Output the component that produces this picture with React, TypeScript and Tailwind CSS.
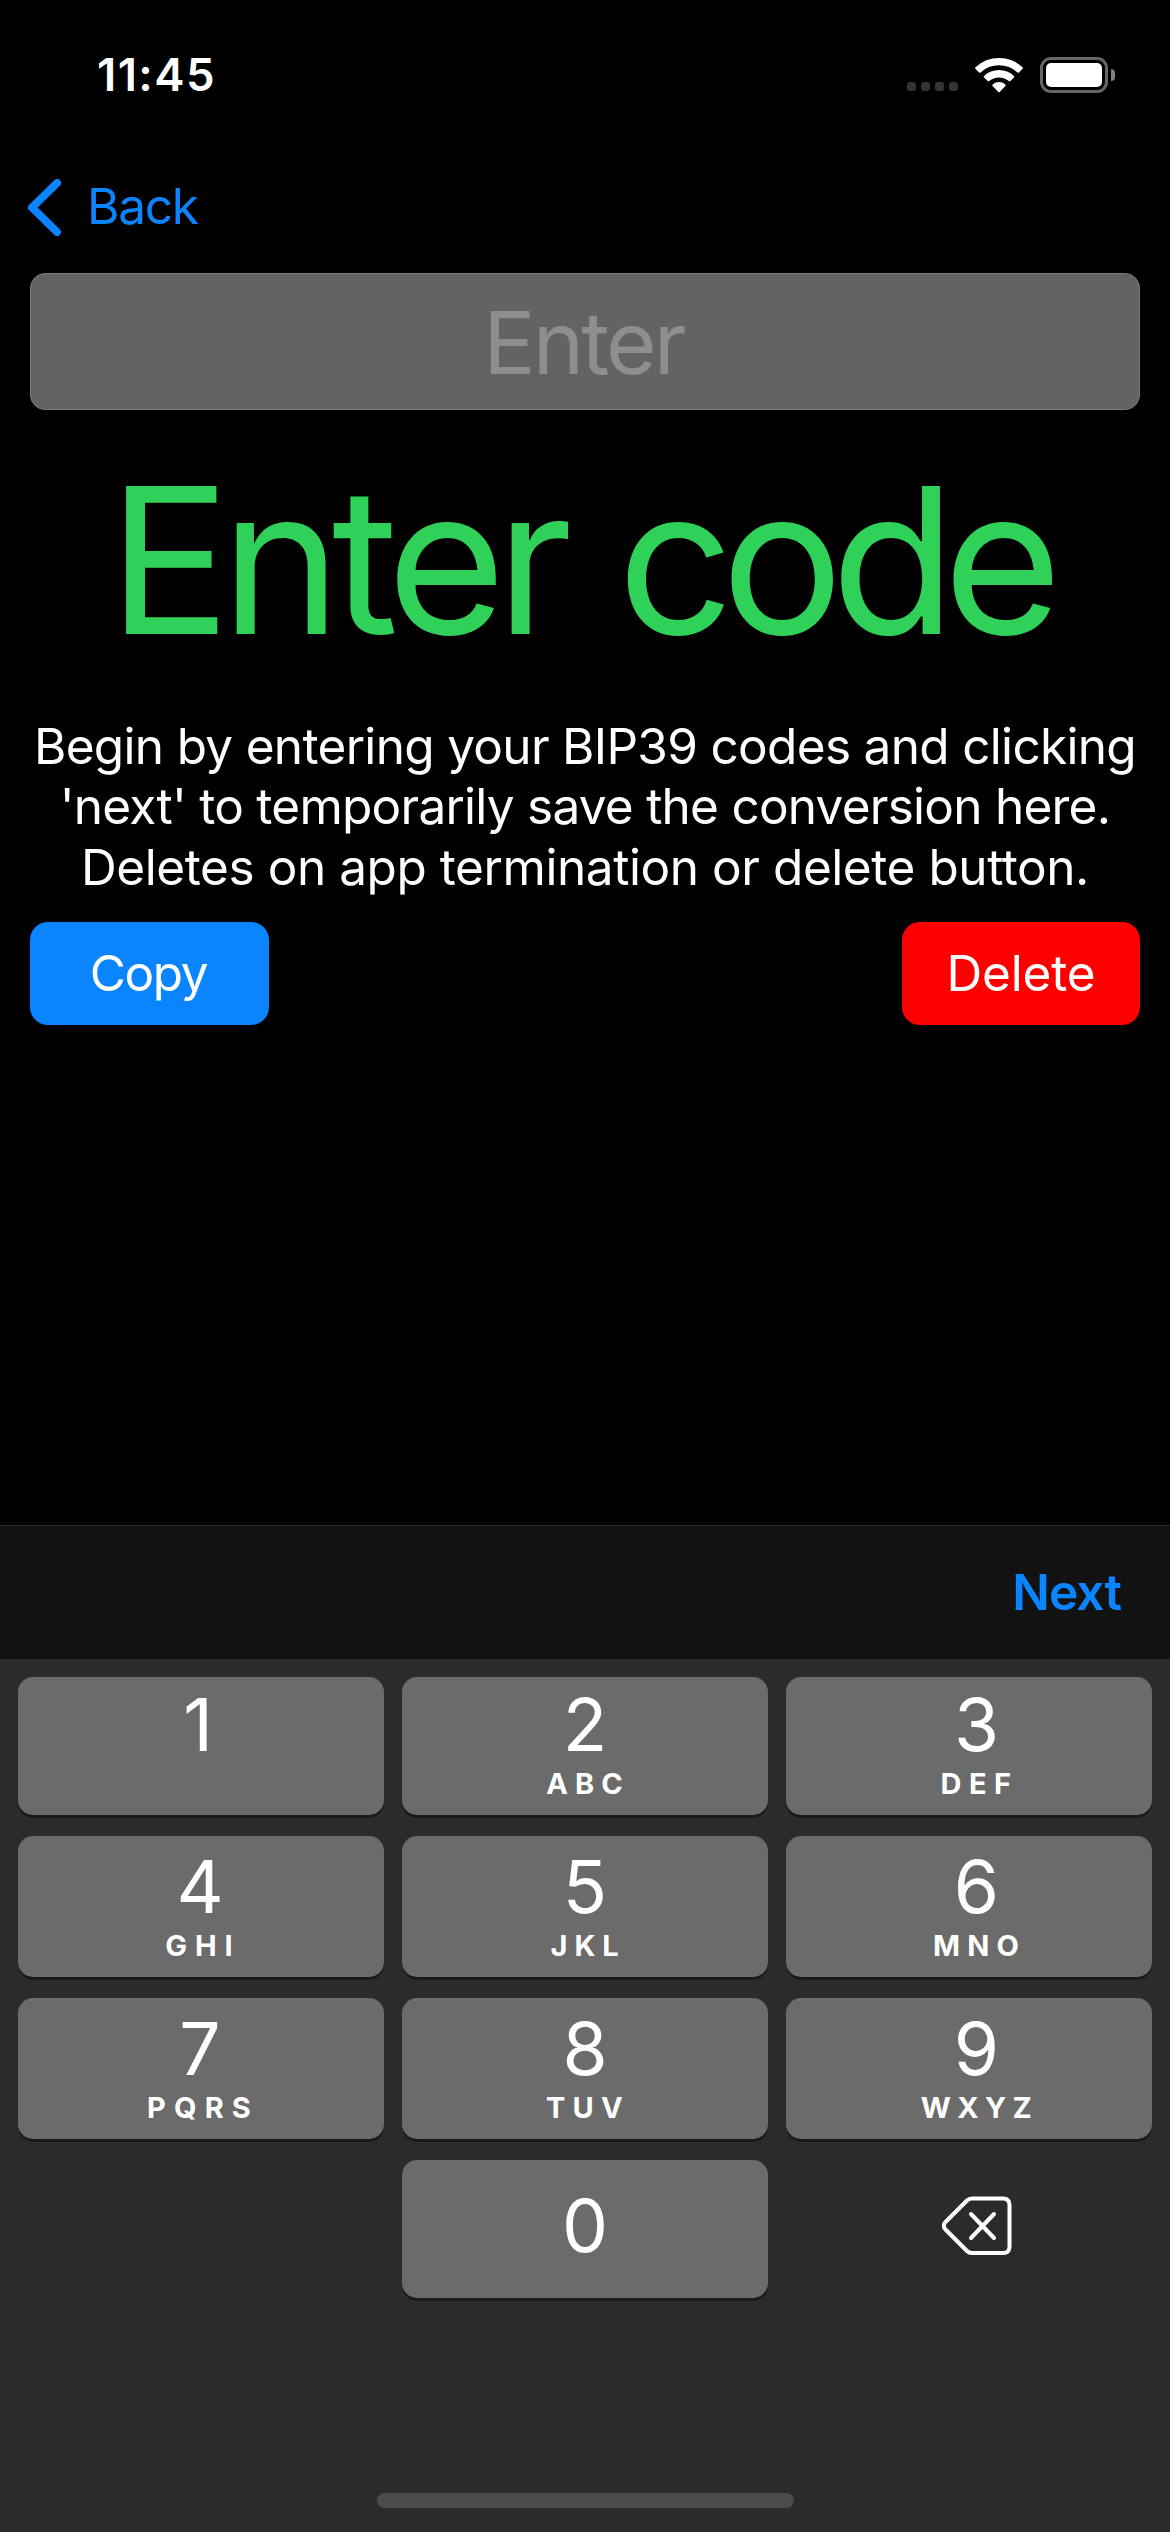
type PadKey = { digit: string; letters: string; tracking: string };

const keys: PadKey[] = [
  { digit: "1", letters: "", tracking: "" },
  { digit: "2", letters: "ABC", tracking: "tracking-[7.1px]" },
  { digit: "3", letters: "DEF", tracking: "tracking-[7.5px]" },
  { digit: "4", letters: "GHI", tracking: "tracking-[7.9px]" },
  { digit: "5", letters: "JKL", tracking: "tracking-[6.9px]" },
  { digit: "6", letters: "MNO", tracking: "tracking-[7.1px]" },
  { digit: "7", letters: "PQRS", tracking: "tracking-[8.1px]" },
  { digit: "8", letters: "TUV", tracking: "tracking-[7.3px]" },
  { digit: "9", letters: "WXYZ", tracking: "tracking-[6.4px]" },
];

// The content of each column sits slightly off the centre of its key cap.
const columnInset = ["pr-[2px]", "", "pl-[15px]"];

const keyCap = "flex w-full flex-col items-center rounded-[15px] bg-[#6b6b6b] shadow-[0_3px_0_#1a1a1a]";

function StatusBar() {
  return (
    <header className="flex h-[149px] shrink-0 items-center justify-between pr-[55px] pl-[97px]">
      <time className="text-[45.5px] leading-none font-semibold tracking-[1.4px]">11:45</time>
      <div className="flex items-center">
        <div className="mt-6 mr-[17px] flex gap-[5px]">
          {[0, 1, 2, 3].map((i) => (
            <span key={i} className="size-[9px] rounded-[3px] bg-[#333333]" />
          ))}
        </div>
        <svg className="mr-[17px] h-[36px] w-[48px]" viewBox="0 0 48 36" fill="white">
          <path d="M0.500 10.300A34.200 34.200 0 0 1 47.500 10.300Q48.300 11 47.600 11.800L44 15.400Q43.300 16 42.500 15.400A27.400 27.400 0 0 0 5.500 15.400Q4.700 16 4 15.400L0.400 11.800Q-0.300 11 0.500 10.300Z" />
          <path d="M9 18.900A22 22 0 0 1 39 18.900Q39.700 19.700 39 20.400L35.300 24.100Q34.600 24.700 33.800 24.100A15 15 0 0 0 14.200 24.100Q13.400 24.700 12.700 24.100L9 20.400Q8.300 19.700 9 18.900Z" />
          <path d="M17.600 27.400A9.800 9.800 0 0 1 30.400 27.400Q31.100 28.200 30.400 28.900L24.700 34.900Q24 35.600 23.300 34.900L17.600 28.900Q16.900 28.200 17.600 27.400Z" />
        </svg>
        <div className="flex h-[36px] w-[68px] items-center justify-center rounded-[11px] border-[3px] border-[#666666]">
          <span className="h-[24px] w-[56px] rounded-[5px] bg-white" />
        </div>
        <span className="ml-[3px] h-[12px] w-[4px] rounded-r-full bg-[#808080]" />
      </div>
    </header>
  );
}

function BackspaceIcon() {
  return (
    <svg
      className="h-[60px] w-[70px]"
      viewBox="0 0 70 60"
      fill="none"
      stroke="white"
      strokeWidth="4"
      strokeLinecap="round"
      strokeLinejoin="round"
    >
      <path d="M30 2.500H61Q67.500 2.500 67.500 9V50.500Q67.500 57 61 57H30Q27 57 25 55L3.500 33.500Q0 29.800 3.500 26L25 4.500Q27 2.500 30 2.500Z" />
      <path d="M29 18 52 42M52 18 29 42" />
    </svg>
  );
}

export default function App() {
  return (
    <div className="flex h-[2532px] w-[1170px] flex-col overflow-hidden bg-black font-['Inter',sans-serif] text-white">
      <StatusBar />

      <nav className="mb-2 flex h-[116px] shrink-0 items-center pl-[28px] text-[#0a84ff]">
        <svg
          className="h-[57px] w-[34px]"
          viewBox="0 0 34 57"
          fill="none"
          stroke="currentColor"
          strokeWidth="8"
          strokeLinecap="round"
          strokeLinejoin="round"
        >
          <path d="M29 4 4 28.500 29 53" />
        </svg>
        <span className="ml-[25px] text-[49.5px] leading-none tracking-[-1.2px]">Back</span>
      </nav>

      <main className="flex flex-1 flex-col px-[30px]">
        <div className="flex h-[137px] shrink-0 items-center justify-center rounded-[15px] border border-[#7c7c7e] bg-[#636366] pt-[2px] pr-[3px] text-[87px] leading-none tracking-[-2.9px] text-[#8d8d92]">
          Enter
        </div>
        <h1 className="pr-[12px] text-center text-[203.5px] leading-[300px] whitespace-nowrap text-[#30d158] [word-spacing:-3px]">
          <span className="tracking-[-9.5px]">Enter</span> <span className="tracking-[-12.3px]">code</span>
        </h1>
        <p className="mt-[6px] text-center text-[49.5px] leading-[60.3px] whitespace-nowrap">
          <span className="block tracking-[-0.68px]">Begin by entering your BIP39 codes and clicking</span>
          <span className="block tracking-[-0.75px]">'next' to temporarily save the conversion here.</span>
          <span className="block tracking-[-0.43px]">Deletes on app termination or delete button.</span>
        </p>
        <div className="mt-[25px] flex justify-between text-[49.5px] leading-none">
          <button className="h-[103px] w-[239px] rounded-[18px] bg-[#0a84ff] pr-[2px] tracking-[-1.4px]">Copy</button>
          <button className="h-[103px] w-[238px] rounded-[18px] bg-[#ff0000] tracking-[-0.2px]">Delete</button>
        </div>
      </main>

      <div className="flex h-[134px] shrink-0 items-center justify-end border-t border-[#2a2a2a] bg-[#121212] pr-[49px] text-[49.5px] leading-none font-semibold tracking-[-0.9px] text-[#0a84ff]">
        Next
      </div>

      <section className="flex h-[873px] shrink-0 flex-col items-center bg-[#2b2b2b] px-[18px] pt-[18px]">
        <div className="grid w-full grid-cols-3 grid-rows-[138px_141px_141px_138px] gap-x-[18px] gap-y-[21px]">
          {keys.map(({ digit, letters, tracking }, i) => (
            <button key={digit} className={`${keyCap} justify-end pb-[9px] ${columnInset[i % 3]}`}>
              <span className={`text-[73px] leading-[74px] ${digit === "1" ? "pr-[4px]" : ""}`}>{digit}</span>
              <span className={`h-[44px] pl-[6px] text-[29px] leading-[44px] font-bold ${tracking}`}>{letters}</span>
            </button>
          ))}
          <span />
          <button className={`${keyCap} justify-center pb-[7px] text-[73px] leading-none`}>0</button>
          <button className="flex items-center justify-center pb-[7px] pl-[15px]">
            <BackspaceIcon />
          </button>
        </div>
        <div className="mt-auto mb-[24px] h-[15px] w-[417px] rounded-full bg-[#4b4b4b]" />
      </section>
    </div>
  );
}
